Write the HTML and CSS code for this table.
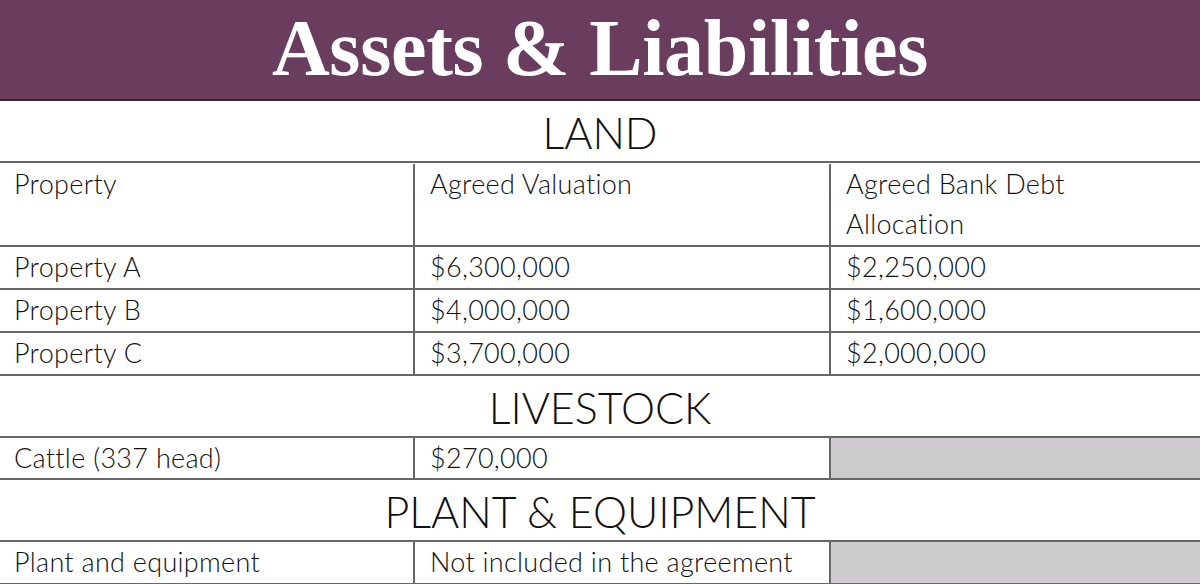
FILE: index.html
```html
<!DOCTYPE html>
<html lang="en">
<head>
<meta charset="utf-8">
<title>Assets &amp; Liabilities</title>
<link rel="stylesheet" href="styles.css">
</head>
<body>
<main class="sheet">
  <header class="banner"><h1 class="banner-title">Assets &amp; Liabilities</h1></header>

  <div class="section">LAND</div>
  <div class="row row-head">
    <div class="cell">Property</div>
    <div class="cell">Agreed Valuation</div>
    <div class="cell">Agreed Bank Debt<br>Allocation</div>
  </div>
  <div class="row">
    <div class="cell">Property A</div>
    <div class="cell">$6,300,000</div>
    <div class="cell">$2,250,000</div>
  </div>
  <div class="row">
    <div class="cell">Property B</div>
    <div class="cell">$4,000,000</div>
    <div class="cell">$1,600,000</div>
  </div>
  <div class="row">
    <div class="cell">Property C</div>
    <div class="cell">$3,700,000</div>
    <div class="cell">$2,000,000</div>
  </div>

  <div class="section">LIVESTOCK</div>
  <div class="row row-short">
    <div class="cell">Cattle (337 head)</div>
    <div class="cell">$270,000</div>
    <div class="cell cell-empty"></div>
  </div>

  <div class="section">PLANT &amp; EQUIPMENT</div>
  <div class="row">
    <div class="cell">Plant and equipment</div>
    <div class="cell">Not included in the agreement</div>
    <div class="cell cell-empty"></div>
  </div>
</main>
</body>
</html>
```
FILE: styles.css
```css
* { box-sizing: border-box; }

html, body {
  margin: 0;
  padding: 0;
  background: #ffffff;
}

body {
  font-family: "Lato", "Liberation Sans", sans-serif;
  font-weight: 300;
  color: #111111;
  overflow: hidden;
}

.sheet {
  width: 1200px;
}

.banner {
  height: 101px;
  background: #6a3c5e;
  border-bottom: 2px solid #2e2a2d;
  display: flex;
  align-items: center;
  justify-content: center;
}

.banner-title {
  margin: 0;
  font-family: "Liberation Serif", "Times New Roman", serif;
  font-weight: 700;
  font-size: 80px;
  line-height: 1;
  color: #ffffff;
  letter-spacing: -0.3px;
  padding-bottom: 4px;
}

.section {
  height: 62px;
  border-bottom: 2px solid #676767;
  display: flex;
  align-items: center;
  justify-content: center;
  font-size: 43px;
  line-height: 1;
  padding-top: 2px;
}

.row {
  display: grid;
  grid-template-columns: 413px 416px 1fr;
  height: 43px;
  border-bottom: 2px solid #676767;
  font-size: 27px;
  line-height: 40px;
  letter-spacing: 0.3px;
}

.row-head { height: 84px; padding-top: 1px; }
.row-short { height: 42px; }

.cell {
  padding: 0 0 0 15px;
  border-left: 2px solid #676767;
}

.cell:first-child {
  border-left: none;
  padding-left: 14px;
}

.cell-empty {
  background: #cdcbcd;
}
```
